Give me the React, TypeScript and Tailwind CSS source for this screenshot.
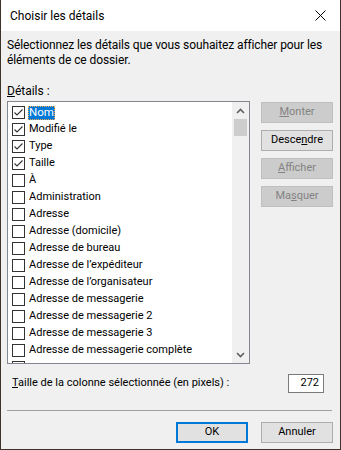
import React from 'react';

const font = { fontFamily: 'Roboto, "Liberation Sans", sans-serif' };

const items: { label: string; checked: boolean }[] = [
  { label: 'Nom', checked: true },
  { label: 'Modifié le', checked: true },
  { label: 'Type', checked: true },
  { label: 'Taille', checked: true },
  { label: 'À', checked: false },
  { label: 'Administration', checked: false },
  { label: 'Adresse', checked: false },
  { label: 'Adresse (domicile)', checked: false },
  { label: 'Adresse de bureau', checked: false },
  { label: 'Adresse de l’expéditeur', checked: false },
  { label: 'Adresse de l’organisateur', checked: false },
  { label: 'Adresse de messagerie', checked: false },
  { label: 'Adresse de messagerie 2', checked: false },
  { label: 'Adresse de messagerie 3', checked: false },
  { label: 'Adresse de messagerie complète', checked: false },
  { label: '', checked: false },
];

const CheckBox: React.FC<{ checked: boolean }> = ({ checked }) => (
  <div className="w-[13px] h-[13px] border border-[#333333] bg-white shrink-0">
    {checked && (
      <svg width="11" height="11" viewBox="0 0 11 11">
        <polyline points="1.5,5.5 4,8 9.5,2.5" fill="none" stroke="#333333" strokeWidth="1.1" />
      </svg>
    )}
  </div>
);

const SideButton: React.FC<{ disabled?: boolean; children: React.ReactNode }> = ({ disabled, children }) => (
  <div
    className={
      'w-[72px] h-[21px] flex items-center justify-center text-[11px] border ' +
      (disabled
        ? 'bg-[#cccccc] border-[#bfbfbf] text-[#838383]'
        : 'bg-[#e1e1e1] border-[#adadad] text-black')
    }
  >
    {children}
  </div>
);

export default function App() {
  return (
    <div
      className="w-[341px] h-[450px] flex flex-col bg-[#f0f0f0] border-x border-b border-[#3d3328] text-black overflow-hidden"
      style={font}
    >
      {/* Title bar */}
      <div className="h-[31px] bg-white flex items-center justify-between pl-[9px] pr-[14px] shrink-0">
        <span className="text-[12px]">Choisir les détails</span>
        <svg width="11" height="11" viewBox="0 0 11 11">
          <path d="M0.5 0.5 L10.5 10.5 M10.5 0.5 L0.5 10.5" stroke="#000" strokeWidth="1" />
        </svg>
      </div>

      {/* Body */}
      <div className="flex flex-col pl-[6px] pt-[7px]">
        <p className="text-[12px] leading-[15px] tracking-[-0.1px]">
          Sélectionnez les détails que vous souhaitez afficher pour les
          <br />
          éléments de ce dossier.
        </p>

        <p className="text-[12px] leading-[15px] mt-[16px]">
          <span className="underline">D</span>étails :
        </p>

        <div className="flex mt-[2px]">
          {/* List box */}
          <div className="w-[243px] h-[263px] border border-[#828790] bg-white flex overflow-hidden">
            <div className="flex-1 flex flex-col pt-[2px] overflow-hidden">
              {items.map((it, i) => (
                <div key={i} className="h-[17px] flex items-center pl-[4px] shrink-0">
                  <CheckBox checked={it.checked} />
                  {i === 0 ? (
                    <span className="ml-[3px] px-[1px] h-[14px] flex items-center text-[11.5px] bg-[#0078d7] text-white outline outline-1 outline-dotted outline-[#f7a84a] -outline-offset-1">
                      {it.label}
                    </span>
                  ) : (
                    it.label && <span className="ml-[4px] text-[11px]">{it.label}</span>
                  )}
                </div>
              ))}
            </div>
            {/* Scrollbar */}
            <div className="w-[17px] bg-[#f0f0f0] flex flex-col shrink-0">
              <div className="h-[17px] flex items-center justify-center">
                <svg width="9" height="6" viewBox="0 0 9 6">
                  <polyline points="1,5 4.5,1.5 8,5" fill="none" stroke="#606060" strokeWidth="1.6" />
                </svg>
              </div>
              <div className="h-[17px] mx-[2px] bg-[#cdcdcd]" />
              <div className="flex-1" />
              <div className="h-[17px] flex items-center justify-center">
                <svg width="9" height="6" viewBox="0 0 9 6">
                  <polyline points="1,1 4.5,4.5 8,1" fill="none" stroke="#606060" strokeWidth="1.6" />
                </svg>
              </div>
            </div>
          </div>

          {/* Side buttons */}
          <div className="flex flex-col gap-[7px] ml-[11px] mt-[1px]">
            <SideButton disabled>
              <span className="underline">M</span>onter
            </SideButton>
            <SideButton>
              Desce<span className="underline">n</span>dre
            </SideButton>
            <SideButton disabled>
              <span className="underline">A</span>fficher
            </SideButton>
            <SideButton disabled>
              Ma<span className="underline">s</span>quer
            </SideButton>
          </div>
        </div>

        {/* Column width */}
        <div className="flex items-center justify-between mt-[10px] pl-[5px] pr-[16px]">
          <span className="text-[11px]">
            <span className="underline">T</span>aille de la colonne sélectionnée (en pixels) :
          </span>
          <div className="w-[36px] h-[19px] border border-[#7a7a7a] bg-white text-[11px] flex items-center justify-end pr-[4px]">
            272
          </div>
        </div>

        {/* Separator */}
        <div className="mt-[17px] w-[325px] border-t border-[#a0a0a0]" />

        {/* Footer buttons */}
        <div className="flex justify-end gap-[13px] mt-[11px] pr-[7px]">
          <div className="w-[72px] h-[21px] flex items-center justify-center text-[11px] bg-[#e1e1e1] border-2 border-[#0078d7]">
            OK
          </div>
          <div className="w-[72px] h-[21px] flex items-center justify-center text-[11px] bg-[#e1e1e1] border border-[#adadad]">
            Annuler
          </div>
        </div>
      </div>
    </div>
  );
}
